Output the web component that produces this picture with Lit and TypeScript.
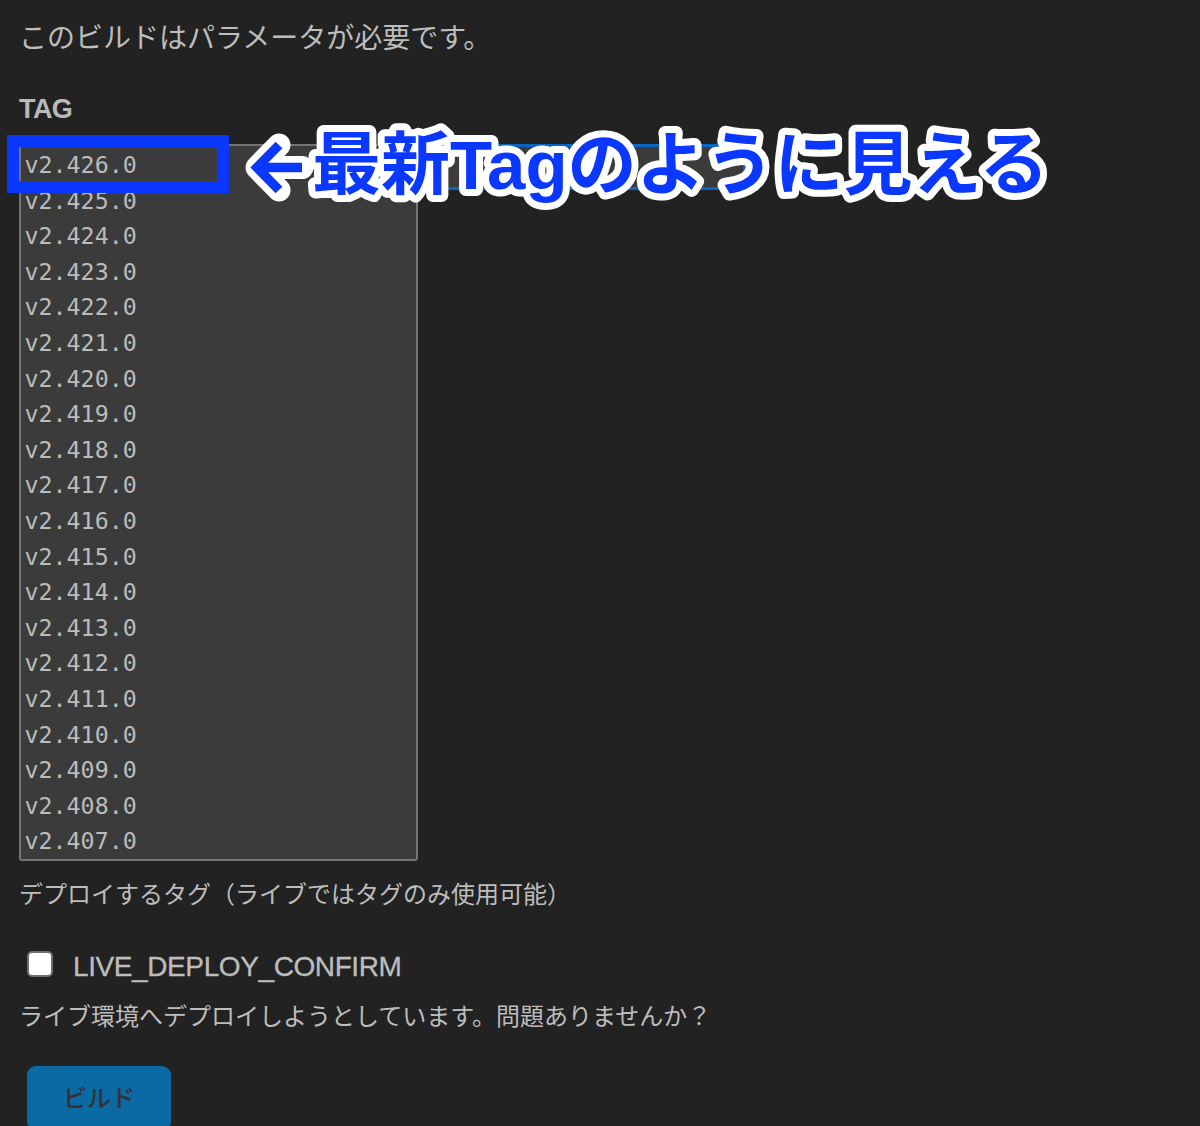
import { LitElement, html, css, svg } from "lit";
import { customElement } from "lit/decorators.js";

const versions = Array.from({ length: 20 }, (_, i) => `v2.${426 - i}.0`);

@customElement("app-root")
export class AppRoot extends LitElement {
  static styles = css`
    :host {
      display: block;
      position: relative;
      width: 1200px;
      height: 1126px;
      overflow: hidden;
      background: #222222;
      color: #bcbcbc;
      font-family: "Liberation Sans", "Noto Sans CJK JP", sans-serif;
    }
    .page {
      display: flex;
      flex-direction: column;
      padding: 18px 0 0 19px;
    }
    .intro {
      margin: 0;
      font-size: 28px;
      line-height: 36px;
      color: #bdbdbd;
      font-family: "Noto Sans CJK JP", sans-serif;
    }
    .tag {
      margin-top: 37px;
      font-size: 27px;
      line-height: 36px;
      font-weight: 700;
      color: #b9b9b9;
      letter-spacing: -0.6px;
    }
    .field {
      margin-top: 17px;
      display: flex;
      align-items: flex-start;
      height: 720px;
    }
    .list {
      box-sizing: border-box;
      width: 399px;
      height: 717px;
      border: 2px solid #747474;
      border-radius: 3px;
      background: #3b3b3b;
      padding: 1px 0 0 3.5px;
      font-family: "DejaVu Sans Mono", monospace;
      font-size: 23.3px;
      line-height: 35.6px;
      color: #bcbcbc;
      overflow: hidden;
    }
    .row {
      height: 35.6px;
    }
    .behind {
      box-sizing: border-box;
      width: 328px;
      height: 46px;
      border: 3px solid #0a66c2;
      border-radius: 3px;
      background: #3b3b3b;
    }
    .hint {
      margin: 12px 0 0;
      font-size: 24px;
      line-height: 34px;
      color: #bdbdbd;
      font-family: "Noto Sans CJK JP", sans-serif;
    }
    .check {
      margin-top: 39px;
      margin-left: 8px;
      display: flex;
      align-items: center;
      gap: 20px;
    }
    .box {
      box-sizing: border-box;
      width: 26px;
      height: 26px;
      border: 2px solid #6e6e6e;
      border-radius: 5px;
      background: #ffffff;
      margin-top: -6px;
    }
    .check-label {
      font-size: 28px;
      line-height: 36px;
      letter-spacing: -0.4px;
      color: #bdbdbd;
      -webkit-text-stroke: 0.3px #bdbdbd;
    }
    .confirm {
      margin: 13px 0 0;
      font-size: 24px;
      line-height: 34px;
      color: #bdbdbd;
      font-family: "Noto Sans CJK JP", sans-serif;
    }
    .build {
      box-sizing: border-box;
      margin: 34px 0 0 8px;
      width: 144px;
      height: 64px;
      border: 0;
      border-radius: 9px;
      background: #0b69a3;
      color: #333333;
      font-family: "Noto Sans CJK JP", sans-serif;
      font-size: 24px;
      font-weight: 500;
      padding: 0 0 4px;
    }
    .note-box {
      position: absolute;
      left: 7px;
      top: 135px;
      width: 222px;
      height: 58px;
      box-sizing: border-box;
      border: 12px solid #0a38ff;
    }
    .note {
      position: absolute;
      left: 0;
      top: 100px;
      width: 1200px;
      height: 130px;
    }
    .note text {
      font-family: "Liberation Sans", "Noto Sans CJK JP", sans-serif;
      font-size: 69px;
      font-weight: 700;
      fill: #0a38ff;
      stroke: #ffffff;
      stroke-width: 14px;
      stroke-linejoin: round;
      paint-order: stroke fill;
    }
    .arrow-outline,
    .arrow-fill {
      fill: none;
      stroke-linejoin: miter;
    }
    .arrow-outline {
      stroke: #ffffff;
      stroke-width: 23px;
      stroke-linecap: round;
      stroke-linejoin: round;
    }
    .arrow-fill {
      stroke: #0a38ff;
      stroke-width: 9.5px;
    }
  `;

  render() {
    return html`
      <div class="page">
        <p class="intro">このビルドはパラメータが必要です。</p>
        <div class="tag">TAG</div>
        <div class="field">
          <div class="list">
            ${versions.map((v) => html`<div class="row">${v}</div>`)}
          </div>
          <div class="behind"></div>
        </div>
        <p class="hint">デプロイするタグ（ライブではタグのみ使用可能）</p>
        <div class="check">
          <div class="box"></div>
          <span class="check-label">LIVE_DEPLOY_CONFIRM</span>
        </div>
        <p class="confirm">ライブ環境へデプロイしようとしています。問題ありませんか？</p>
        <button class="build">ビルド</button>
      </div>
      <div class="note-box"></div>
      <svg class="note" viewBox="0 0 1200 130">
        ${svg`
          <path class="arrow-outline" d="M302 67.5H258M279 45L257 67.5L279 90" />
          <path class="arrow-fill" d="M302 67.5H258M279 45L257 67.5L279 90" />
          <text x="312" y="89">最新Tagのように見える</text>
        `}
      </svg>
    `;
  }
}
